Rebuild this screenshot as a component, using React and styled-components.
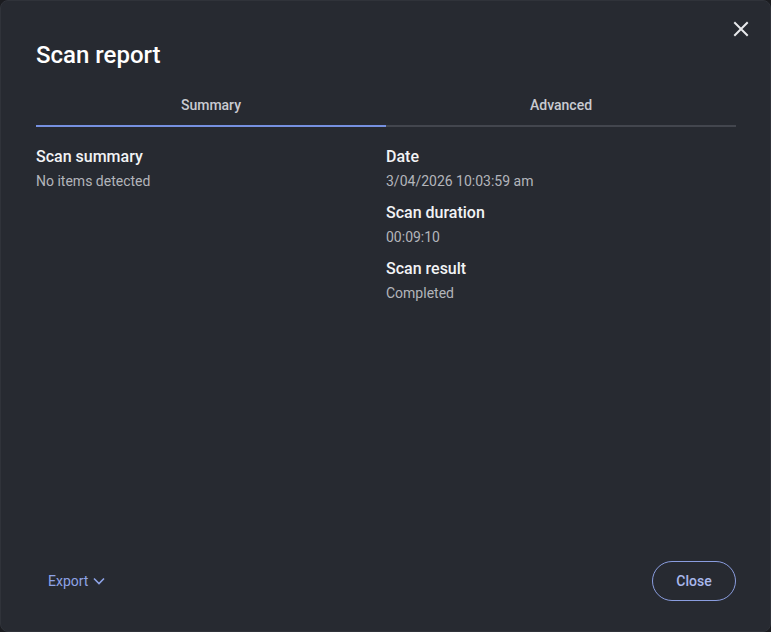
import React, { useState } from "react";
import styled, { createGlobalStyle } from "styled-components";

const Global = createGlobalStyle`
  html, body { margin: 0; padding: 0; background: #1b1c20; }
  body { font-family: Roboto, "Noto Sans", sans-serif; -webkit-font-smoothing: antialiased; }
  * { box-sizing: border-box; }
`;

const Dialog = styled.div`
  width: 771px;
  height: 632px;
  background: #272a31;
  border: 1px solid #30333a;
  border-radius: 8px;
  display: flex;
  flex-direction: column;
  padding: 0 34px 30px 35px;
  position: relative;
`;

const Header = styled.div`
  display: flex;
  flex-direction: column;
  align-items: stretch;
`;

const Title = styled.h1`
  margin: 38px 0 0 0;
  font-size: 24px;
  font-weight: 500;
  color: #ffffff;
  line-height: 32px;
`;

const CloseIcon = styled.button`
  position: absolute;
  top: 16px;
  right: 17px;
  width: 24px;
  height: 24px;
  padding: 0;
  border: none;
  background: transparent;
  color: #e8e9ec;
  display: flex;
  align-items: center;
  justify-content: center;
  cursor: pointer;
`;

const Tabs = styled.div`
  display: flex;
  margin-top: 18px;
`;

const Tab = styled.button`
  flex: 1;
  height: 38px;
  background: transparent;
  border: none;
  border-bottom: 2px solid ${(p) => (p.$active ? "#7690e0" : "#43464e")};
  color: #c9cbd1;
  font-family: Roboto, sans-serif;
  font-size: 14px;
  font-weight: 500;
  padding: 0 0 4px 0;
  cursor: pointer;
`;

const Content = styled.div`
  display: grid;
  grid-template-columns: 1fr 1fr;
  padding-top: 19px;
  flex: 1;
  align-content: start;
`;

const Column = styled.div`
  display: flex;
  flex-direction: column;
  gap: 10px;
`;

const Field = styled.div`
  display: flex;
  flex-direction: column;
`;

const Label = styled.div`
  font-size: 16px;
  font-weight: 500;
  color: #f2f3f5;
  line-height: 22px;
`;

const Value = styled.div`
  font-size: 14px;
  color: #b3b5bb;
  line-height: 22px;
  margin-top: 2px;
`;

const Footer = styled.div`
  display: flex;
  align-items: center;
  justify-content: space-between;
`;

const ExportButton = styled.button`
  display: flex;
  align-items: center;
  gap: 5px;
  background: transparent;
  border: none;
  color: #8ea3e6;
  font-family: Roboto, sans-serif;
  font-size: 14px;
  padding: 0 12px;
  height: 40px;
  cursor: pointer;
`;

const CloseButton = styled.button`
  width: 84px;
  height: 40px;
  border-radius: 20px;
  border: 1px solid #8a9ddf;
  background: transparent;
  color: #a9b8ec;
  font-family: Roboto, sans-serif;
  font-size: 14px;
  font-weight: 500;
  padding: 0 0 1px 0;
  cursor: pointer;
`;

export default function App() {
  const [tab, setTab] = useState(0);
  return (
    <>
      <Global />
      <Dialog>
        <CloseIcon aria-label="Close">
          <svg width="16" height="16" viewBox="0 0 16 16" fill="none" stroke="currentColor" strokeWidth="2" strokeLinecap="square">
            <path d="M2 2 L14 14 M14 2 L2 14" />
          </svg>
        </CloseIcon>
        <Header>
          <Title>Scan report</Title>
          <Tabs>
            <Tab $active={tab === 0} onClick={() => setTab(0)}>Summary</Tab>
            <Tab $active={tab === 1} onClick={() => setTab(1)}>Advanced</Tab>
          </Tabs>
        </Header>
        <Content>
          <Column>
            <Field>
              <Label>Scan summary</Label>
              <Value>No items detected</Value>
            </Field>
          </Column>
          <Column>
            <Field>
              <Label>Date</Label>
              <Value>3/04/2026 10:03:59 am</Value>
            </Field>
            <Field>
              <Label>Scan duration</Label>
              <Value>00:09:10</Value>
            </Field>
            <Field>
              <Label>Scan result</Label>
              <Value>Completed</Value>
            </Field>
          </Column>
        </Content>
        <Footer>
          <ExportButton>
            Export
            <svg width="12" height="8" viewBox="0 0 12 8" fill="none" stroke="currentColor" strokeWidth="1.6">
              <path d="M1 1.5 L6 6.5 L11 1.5" />
            </svg>
          </ExportButton>
          <CloseButton>Close</CloseButton>
        </Footer>
      </Dialog>
    </>
  );
}
